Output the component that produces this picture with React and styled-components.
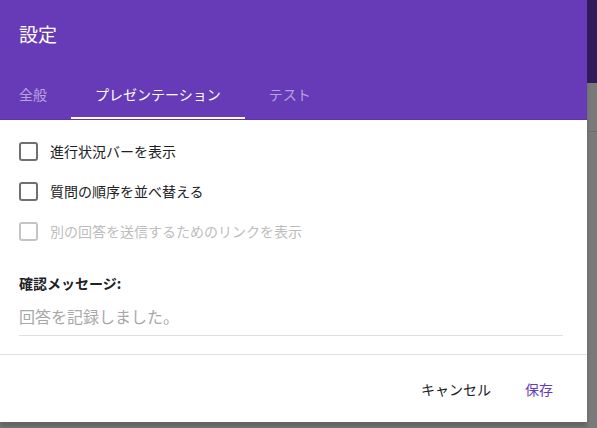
import React from "react";
import styled, { createGlobalStyle, css } from "styled-components";

const GlobalStyle = createGlobalStyle`
  html, body {
    margin: 0;
    padding: 0;
    background: #7a7a7a;
  }
  body {
    font-family: "Noto Sans CJK JP", "Noto Sans", "Liberation Sans", sans-serif;
  }
`;

const Page = styled.div`
  display: flex;
  width: 597px;
  height: 428px;
  overflow: hidden;
  background: #7a7a7a;
`;

const Dialog = styled.div`
  width: 587px;
  height: 422px;
  flex: none;
  display: flex;
  flex-direction: column;
  background: #fff;
  box-shadow: 0 5px 4px rgba(0, 0, 0, 0.18);
`;

const Backdrop = styled.div`
  flex: 1;
  display: flex;
  flex-direction: column;
`;

const BackdropBar = styled.div`
  height: 83px;
  background: #311b5b;
`;

const BackdropRow = styled.div`
  height: 48px;
  border-bottom: 1px solid #6c6c6c;
`;

const Header = styled.div`
  background: #673ab7;
  border-bottom: 1px solid #5e34a9;
`;

const Title = styled.div`
  height: 71px;
  box-sizing: border-box;
  padding: 0 0 5px 19px;
  display: flex;
  align-items: center;
  color: #fff;
  font-size: 19px;
`;

const Tabs = styled.div`
  display: flex;
  height: 48px;
`;

const Tab = styled.div`
  position: relative;
  display: flex;
  align-items: center;
  padding: 0 24px 2px;
  font-size: 14px;
  color: ${(p) => (p.active ? "#fff" : "rgba(255,255,255,0.54)")};
  &:first-child {
    padding-left: 19px;
  }
  ${(p) =>
    p.active &&
    css`
      &::after {
        content: "";
        position: absolute;
        left: 0;
        right: 0;
        bottom: 0;
        height: 2px;
        background: #fff;
      }
    `}
`;

const Body = styled.div`
  padding: 11px 24px 18px 19px;
  border-bottom: 1px solid #e0e0e0;
`;

const CheckRow = styled.label`
  display: flex;
  align-items: center;
  height: 40px;
  font-size: 14px;
  color: ${(p) => (p.disabled ? "#bdbdbd" : "#202124")};
`;

const Box = styled.span`
  width: 15px;
  height: 15px;
  border: 2px solid ${(p) => (p.disabled ? "#c4c4c4" : "#707070")};
  border-radius: 3px;
  margin-right: 12px;
  flex: none;
`;

const Label = styled.div`
  margin-top: 22px;
  font-size: 14px;
  line-height: 20px;
  font-weight: bold;
  color: #202124;
`;

const Input = styled.input`
  display: block;
  width: 100%;
  box-sizing: border-box;
  margin-top: 12px;
  padding: 0 0 8px;
  border: none;
  border-bottom: 1px solid #e0e0e0;
  outline: none;
  font-family: inherit;
  font-size: 16px;
  line-height: 22px;
  height: 31px;
  color: #202124;
  &::placeholder {
    color: #a8a8a8;
  }
`;

const Footer = styled.div`
  flex: 1;
  display: flex;
  align-items: center;
  justify-content: flex-end;
  padding-right: 17px;
`;

const Button = styled.button`
  border: none;
  background: none;
  padding: 8px 17px;
  font-family: inherit;
  font-size: 14px;
  color: ${(p) => (p.primary ? "#673ab7" : "#202124")};
  cursor: pointer;
`;

const options = [
  { text: "進行状況バーを表示" },
  { text: "質問の順序を並べ替える" },
  { text: "別の回答を送信するためのリンクを表示", disabled: true },
];

const App = () => {
  return (
    <Page>
      <GlobalStyle />
      <Dialog>
        <Header>
          <Title>設定</Title>
          <Tabs>
            <Tab>全般</Tab>
            <Tab active>プレゼンテーション</Tab>
            <Tab>テスト</Tab>
          </Tabs>
        </Header>
        <Body>
          {options.map((o) => (
            <CheckRow key={o.text} disabled={o.disabled}>
              <Box disabled={o.disabled} />
              {o.text}
            </CheckRow>
          ))}
          <Label>確認メッセージ:</Label>
          <Input placeholder="回答を記録しました。" />
        </Body>
        <Footer>
          <Button>キャンセル</Button>
          <Button primary>保存</Button>
        </Footer>
      </Dialog>
      <Backdrop>
        <BackdropBar />
        <BackdropRow />
      </Backdrop>
    </Page>
  );
};

export default App;
